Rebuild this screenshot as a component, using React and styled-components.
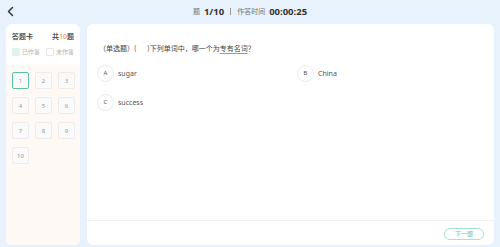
import React from 'react';
import styled, { createGlobalStyle } from 'styled-components';

const GlobalStyle = createGlobalStyle`
  html, body {
    margin: 0;
    padding: 0;
    background: #e7f2fd;
  }
  body {
    font-family: "Noto Sans", "Noto Sans CJK SC", sans-serif;
  }
  * {
    box-sizing: border-box;
  }
`;

const Page = styled.div`
  width: 500px;
  height: 247px;
  display: flex;
  flex-direction: column;
  background: #e7f2fd;
  overflow: hidden;
`;

const Header = styled.div`
  height: 24px;
  flex-shrink: 0;
  display: grid;
  grid-template-columns: 1fr auto 1fr;
  align-items: center;
  padding-bottom: 2px;
`;

const BackButton = styled.div`
  display: flex;
  align-items: center;
  padding-left: 6px;
  color: #333;
`;

const Progress = styled.div`
  display: flex;
  align-items: center;
  gap: 4px;
  color: #777;
  font-size: 7px;
  font-family: "Noto Sans CJK SC", sans-serif;
`;

const Strong = styled.span`
  font-size: 9.5px;
  font-weight: 700;
  color: #333;
  font-family: "Noto Sans", sans-serif;
`;

const Divider = styled.span`
  width: 1px;
  height: 7px;
  background: #999;
  margin: 0 2px;
`;

const Body = styled.div`
  flex: 1;
  display: flex;
  gap: 7px;
  padding: 0 6px 2px 6px;
  min-height: 0;
`;

const CardPanel = styled.div`
  flex: 0 0 74px;
  border-radius: 6px;
  background: #fff;
  display: flex;
  flex-direction: column;
  overflow: hidden;
`;

const CardTop = styled.div`
  height: 41px;
  padding: 7px 6px 0 6px;
`;

const CardTitleRow = styled.div`
  display: flex;
  justify-content: space-between;
  align-items: center;
  font-size: 7px;
  font-weight: 500;
  color: #333;
  height: 10px;
`;

const Count = styled.span`
  color: #f39a4f;
`;

const Legend = styled.div`
  display: flex;
  align-items: center;
  gap: 6px;
  margin-top: 6px;
  font-size: 6px;
  color: #b5b5b5;
  white-space: nowrap;
`;

const LegendItem = styled.div`
  display: flex;
  align-items: center;
  gap: 2px;
`;

const Swatch = styled.span`
  width: 8px;
  height: 8px;
  border-radius: 1px;
  background: ${p => (p.$done ? '#def4ec' : '#fff')};
  border: 1px solid ${p => (p.$done ? '#def4ec' : '#e6e6e6')};
`;

const CardGrid = styled.div`
  flex: 1;
  background: #fff9f5;
  padding: 7px 5px 0 6px;
  display: grid;
  grid-template-columns: repeat(3, 17px);
  grid-auto-rows: 17px;
  column-gap: 6px;
  row-gap: 8px;
  align-content: start;
`;

const Cell = styled.div`
  display: flex;
  align-items: center;
  justify-content: center;
  border-radius: 2px;
  font-size: 6px;
  color: #999;
  background: #fafafa;
  border: ${p => (p.$active ? '1.5px solid #5bc1a3' : '1px solid #ececec')};
`;

const Main = styled.div`
  flex: 1;
  min-width: 0;
  border-radius: 6px;
  background: #fff;
  display: flex;
  flex-direction: column;
`;

const Content = styled.div`
  flex: 1;
  padding: 18px 10px 0 10px;
`;

const Question = styled.div`
  font-size: 7px;
  color: #444;
  line-height: 12px;
  padding-left: 2px;
  font-family: "Noto Sans CJK SC", sans-serif;
`;

const Underline = styled.span`
  text-decoration: underline;
  text-decoration-color: #999;
  text-underline-offset: 1.5px;
`;

const Options = styled.div`
  display: grid;
  grid-template-columns: 200px 1fr;
  row-gap: 11px;
  margin-top: 10px;
`;

const Option = styled.div`
  display: flex;
  align-items: center;
  gap: 4px;
  height: 18px;
  font-size: 7px;
  color: #555;
`;

const OptionBadge = styled.span`
  width: 17px;
  height: 17px;
  border-radius: 50%;
  border: 1px solid #ececec;
  display: flex;
  align-items: center;
  justify-content: center;
  font-size: 6px;
  color: #555;
`;

const Footer = styled.div`
  height: 25px;
  border-top: 1px solid #f0f0f0;
  display: flex;
  align-items: center;
  justify-content: flex-end;
  padding: 1px 10px 0 0;
`;

const NextButton = styled.div`
  width: 40px;
  height: 12px;
  border-radius: 6px;
  border: 1px solid #a6e2cf;
  color: #5bc1a3;
  font-size: 6px;
  display: flex;
  align-items: center;
  justify-content: center;
`;

const options = [
  { key: 'A', text: 'sugar' },
  { key: 'B', text: 'China' },
  { key: 'C', text: 'success' },
];

export default function App() {
  const nums = Array.from({ length: 10 }, (_, i) => i + 1);
  return (
    <Page>
      <GlobalStyle />
      <Header>
        <BackButton>
          <svg width="9" height="11" viewBox="0 0 9 11" fill="none">
            <polyline points="6.5,1.5 2.5,5.5 6.5,9.5" stroke="#333" strokeWidth="1.5" strokeLinecap="round" strokeLinejoin="round" />
          </svg>
        </BackButton>
        <Progress>
          <span>题</span>
          <Strong>1/10</Strong>
          <Divider />
          <span>作答时间</span>
          <Strong>00:00:25</Strong>
        </Progress>
        <div />
      </Header>
      <Body>
        <CardPanel>
          <CardTop>
            <CardTitleRow>
              <span>答题卡</span>
              <span>
                共<Count>10</Count>题
              </span>
            </CardTitleRow>
            <Legend>
              <LegendItem>
                <Swatch $done />
                已作答
              </LegendItem>
              <LegendItem>
                <Swatch />
                未作答
              </LegendItem>
            </Legend>
          </CardTop>
          <CardGrid>
            {nums.map(n => (
              <Cell key={n} $active={n === 1}>
                {n}
              </Cell>
            ))}
          </CardGrid>
        </CardPanel>
        <Main>
          <Content>
            <Question>
              （单选题）(&nbsp;&nbsp;&nbsp;&nbsp;&nbsp;&nbsp;&nbsp;)下列单词中，哪一个为<Underline>专有名词</Underline>？
            </Question>
            <Options>
              {options.map(o => (
                <Option key={o.key}>
                  <OptionBadge>{o.key}</OptionBadge>
                  {o.text}
                </Option>
              ))}
            </Options>
          </Content>
          <Footer>
            <NextButton>下一题</NextButton>
          </Footer>
        </Main>
      </Body>
    </Page>
  );
}
